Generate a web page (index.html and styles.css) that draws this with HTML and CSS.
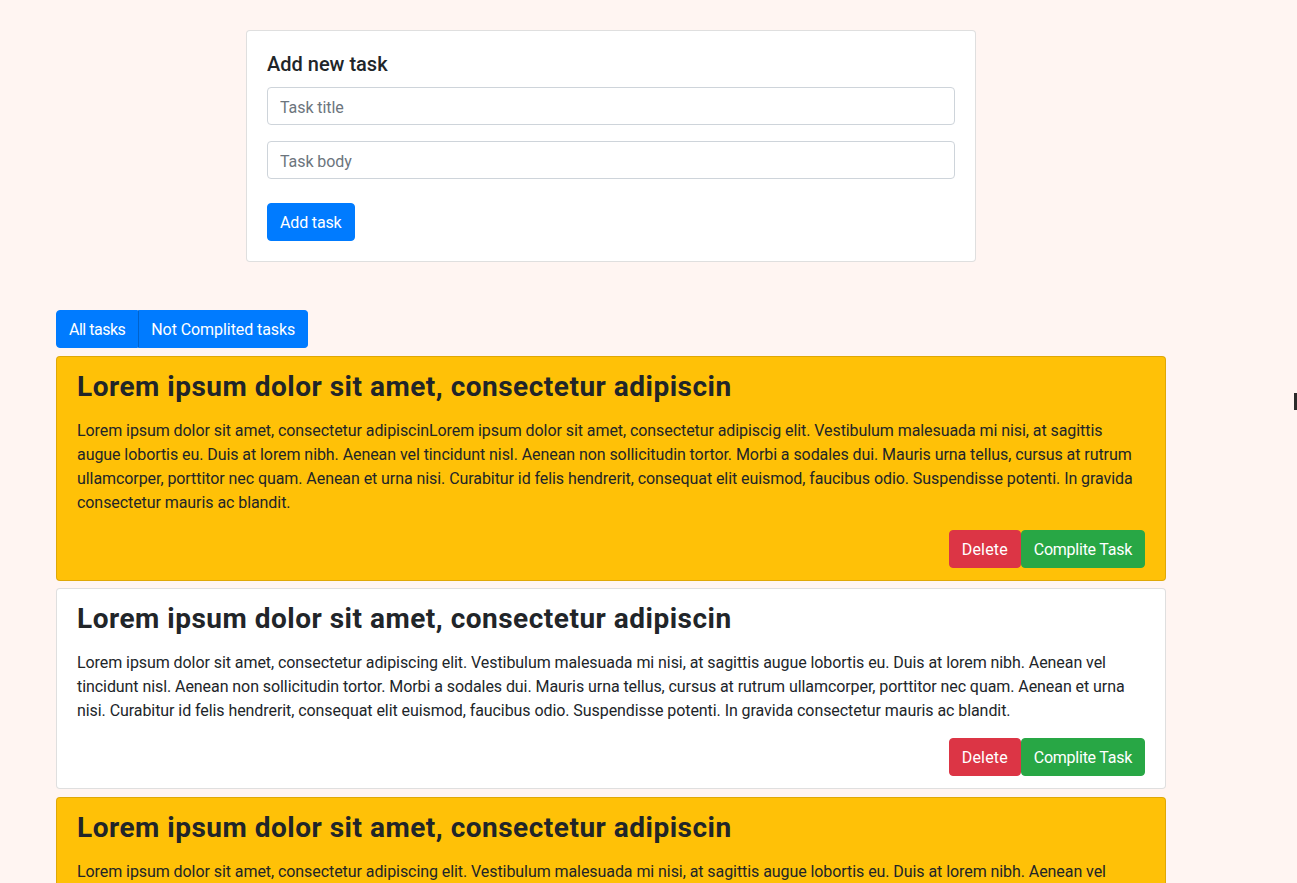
FILE: index.html
```html
<!DOCTYPE html>
<html lang="en">
<head>
<meta charset="utf-8">
<title>Tasks</title>
<link rel="stylesheet" href="styles.css">
</head>
<body>
<div class="page">
  <div class="form-card">
    <h5 class="form-title">Add new task</h5>
    <input class="field" type="text" placeholder="Task title">
    <input class="field" type="text" placeholder="Task body">
    <button class="btn btn-primary add-btn">Add task</button>
  </div>

  <div class="filter-group">
    <button class="btn btn-primary group-first">All tasks</button>
    <button class="btn btn-primary group-last">Not Complited tasks</button>
  </div>

  <div class="task-list">
    <div class="task-card task-warning">
      <h3 class="task-title">Lorem ipsum dolor sit amet, consectetur adipiscin</h3>
      <p class="task-text">Lorem ipsum dolor sit amet, consectetur adipiscinLorem ipsum dolor sit amet, consectetur adipiscig elit. Vestibulum malesuada mi nisi, at sagittis augue lobortis eu. Duis at lorem nibh. Aenean vel tincidunt nisl. Aenean non sollicitudin tortor. Morbi a sodales dui. Mauris urna tellus, cursus at rutrum ullamcorper, porttitor nec quam. Aenean et urna nisi. Curabitur id felis hendrerit, consequat elit euismod, faucibus odio. Suspendisse potenti. In gravida consectetur mauris ac blandit.</p>
      <div class="task-actions">
        <button class="btn btn-danger">Delete</button>
        <button class="btn btn-success">Complite Task</button>
      </div>
    </div>

    <div class="task-card">
      <h3 class="task-title">Lorem ipsum dolor sit amet, consectetur adipiscin</h3>
      <p class="task-text">Lorem ipsum dolor sit amet, consectetur adipiscing elit. Vestibulum malesuada mi nisi, at sagittis augue lobortis eu. Duis at lorem nibh. Aenean vel tincidunt nisl. Aenean non sollicitudin tortor. Morbi a sodales dui. Mauris urna tellus, cursus at rutrum ullamcorper, porttitor nec quam. Aenean et urna nisi. Curabitur id felis hendrerit, consequat elit euismod, faucibus odio. Suspendisse potenti. In gravida consectetur mauris ac blandit.</p>
      <div class="task-actions">
        <button class="btn btn-danger">Delete</button>
        <button class="btn btn-success">Complite Task</button>
      </div>
    </div>

    <div class="task-card task-warning">
      <h3 class="task-title">Lorem ipsum dolor sit amet, consectetur adipiscin</h3>
      <p class="task-text">Lorem ipsum dolor sit amet, consectetur adipiscing elit. Vestibulum malesuada mi nisi, at sagittis augue lobortis eu. Duis at lorem nibh. Aenean vel tincidunt nisl. Aenean non sollicitudin tortor. Morbi a sodales dui. Mauris urna tellus, cursus at rutrum ullamcorper, porttitor nec quam. Aenean et urna nisi. Curabitur id felis hendrerit, consequat elit euismod, faucibus odio. Suspendisse potenti. In gravida consectetur mauris ac blandit.</p>
      <div class="task-actions">
        <button class="btn btn-danger">Delete</button>
        <button class="btn btn-success">Complite Task</button>
      </div>
    </div>
  </div>
</div>
<div class="edge-mark"></div>
</body>
</html>
```
FILE: styles.css
```css
* { box-sizing: border-box; }

html, body {
  margin: 0;
  padding: 0;
}

body {
  background: #fff5f2;
  color: #212529;
  font-family: Roboto, "Open Sans", sans-serif;
  font-size: 16px;
  line-height: 1.5;
  overflow: hidden;
}

.page {
  width: 1110px;
  margin-left: 56px;
  padding-top: 30px;
}

.form-card {
  width: 730px;
  margin: 0 auto;
  background: #fff;
  border: 1px solid rgba(0, 0, 0, 0.125);
  border-radius: 4px;
  padding: 20px;
  display: flex;
  flex-direction: column;
  align-items: flex-start;
}

.form-title {
  margin: 0 0 12px;
  padding-top: 1px;
  height: 24px;
  font-size: 20px;
  font-weight: 500;
  line-height: 1.2;
}

.field {
  display: block;
  width: 100%;
  height: 38px;
  padding: 7px 12px 5px;
  margin: 0 0 16px;
  font-family: inherit;
  font-size: 16px;
  line-height: 1.5;
  color: #495057;
  background: #fff;
  border: 1px solid #ced4da;
  border-radius: 4px;
  letter-spacing: -0.07px;
}

.field::placeholder { color: #6c757d; }

.btn {
  display: inline-block;
  font-family: inherit;
  font-size: 16px;
  line-height: 24px;
  font-weight: 400;
  padding: 7px 12px 5px;
  border: 1px solid transparent;
  border-radius: 4px;
  color: #fff;
  cursor: pointer;
  letter-spacing: -0.07px;
}

.btn-primary { background: #007bff; border-color: #007bff; }
.btn-danger { background: #dc3545; border-color: #dc3545; letter-spacing: 0.15px; }
.btn-success { background: #28a745; border-color: #28a745; letter-spacing: -0.25px; }

.add-btn { margin-top: 8px; letter-spacing: -0.15px; }

.filter-group {
  display: flex;
  margin-top: 48px;
}

.group-first {
  border-top-right-radius: 0;
  border-bottom-right-radius: 0;
  letter-spacing: -0.5px;
}

.group-last {
  border-top-left-radius: 0;
  border-bottom-left-radius: 0;
  border-left-color: #0062cc;
}

.task-list {
  display: flex;
  flex-direction: column;
  gap: 7px;
  margin-top: 8px;
}

.task-card {
  background: #fff;
  border: 1px solid rgba(0, 0, 0, 0.125);
  border-radius: 4px;
  padding: 12px 20px;
}

.task-card + .task-card + .task-card { margin-top: 1px; }

.task-warning { background: #ffc107; }

.task-title {
  margin: 0 0 16px;
  padding-top: 2px;
  height: 33px;
  font-size: 28px;
  font-weight: 700;
  line-height: 31px;
  letter-spacing: 0.5px;
}

.task-text {
  margin: 0 0 15px;
  padding-top: 1px;
  letter-spacing: -0.07px;
}

.task-actions {
  display: flex;
  justify-content: flex-end;
}

.edge-mark {
  position: absolute;
  left: 1294px;
  top: 393px;
  width: 3px;
  height: 17px;
  background: #2b2b2b;
}
```
